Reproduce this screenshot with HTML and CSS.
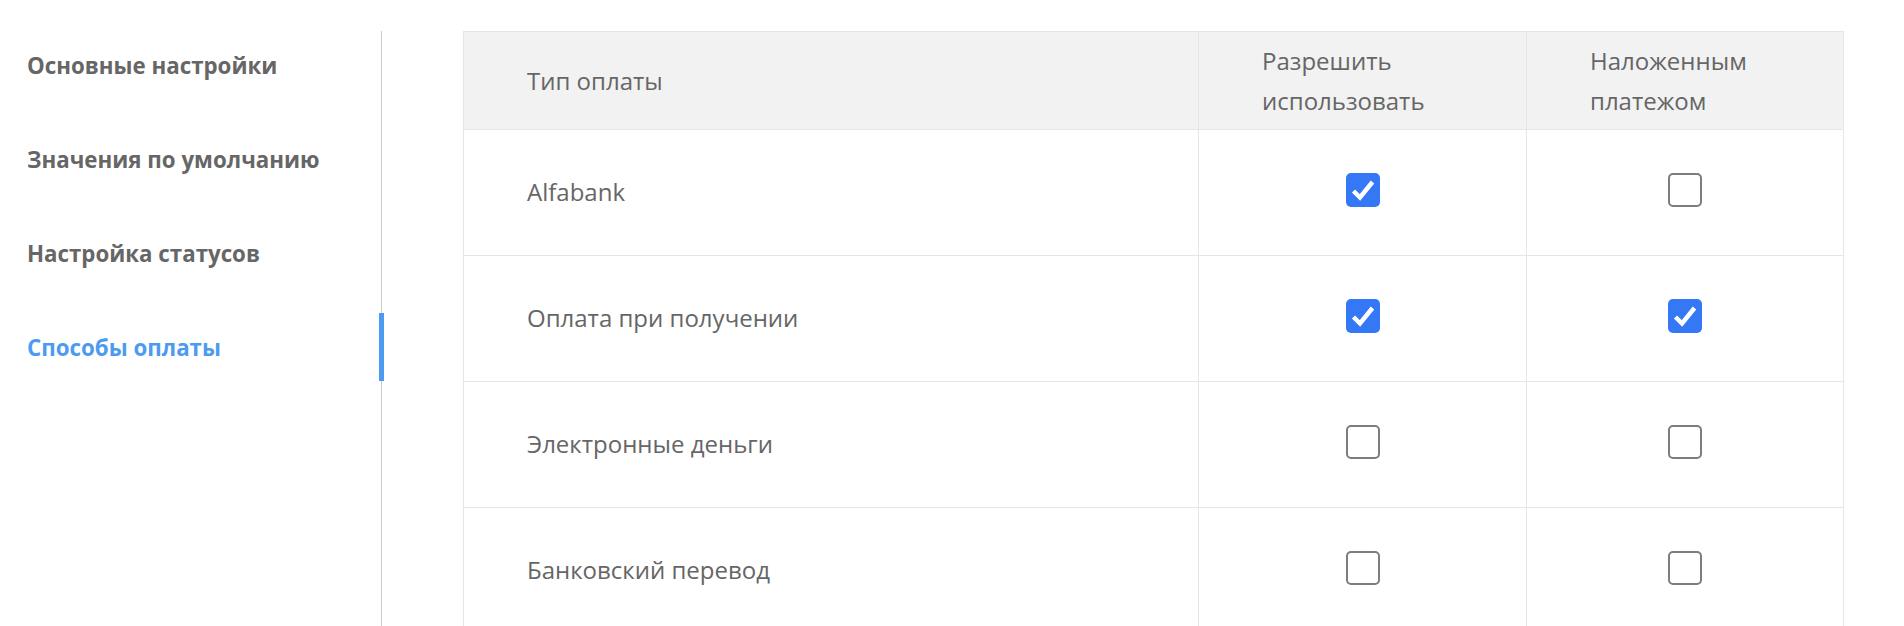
FILE: index.html
```html
<!DOCTYPE html>
<html>

<head>
    <meta charset="UTF-8">
    <title>Способы оплаты</title>
    <link rel="stylesheet" href="styles.css">
</head>

<body>
    <div class="page">
        <nav class="sideMenu">
            <a class="menuItem" href="#">Основные настройки</a>
            <a class="menuItem" href="#">Значения по умолчанию</a>
            <a class="menuItem" href="#">Настройка статусов</a>
            <a class="menuItem active" href="#">Способы оплаты</a>
        </nav>
        <main class="content">
            <table class="payTable">
                <colgroup>
                    <col class="colName">
                    <col class="colAllow">
                    <col class="colCod">
                </colgroup>
                <thead>
                    <tr>
                        <th>Тип оплаты</th>
                        <th>Разрешить<br>использовать</th>
                        <th>Наложенным<br>платежом</th>
                    </tr>
                </thead>
                <tbody>
                    <tr>
                        <td>Alfabank</td>
                        <td class="checkCell"><span class="checkBox checked"><svg viewBox="0 0 34 34"><path d="M7.5 18 L14 24.5 L26.5 9"/></svg></span></td>
                        <td class="checkCell"><span class="checkBox"></span></td>
                    </tr>
                    <tr>
                        <td>Оплата при получении</td>
                        <td class="checkCell"><span class="checkBox checked"><svg viewBox="0 0 34 34"><path d="M7.5 18 L14 24.5 L26.5 9"/></svg></span></td>
                        <td class="checkCell"><span class="checkBox checked"><svg viewBox="0 0 34 34"><path d="M7.5 18 L14 24.5 L26.5 9"/></svg></span></td>
                    </tr>
                    <tr>
                        <td>Электронные деньги</td>
                        <td class="checkCell"><span class="checkBox"></span></td>
                        <td class="checkCell"><span class="checkBox"></span></td>
                    </tr>
                    <tr>
                        <td>Банковский перевод</td>
                        <td class="checkCell"><span class="checkBox"></span></td>
                        <td class="checkCell"><span class="checkBox"></span></td>
                    </tr>
                </tbody>
            </table>
        </main>
    </div>
</body>

</html>
```

FILE: styles.css
```css
html {
    background: #ffffff;
    color: #666666;
    font-family: "Open Sans", "Noto Sans", sans-serif;
    font-size: 24px;
}
body {
    margin: 0;
    height: 626px;
    overflow: hidden;
}
.page {
    display: flex;
    align-items: stretch;
    padding-top: 31px;
    height: 100%;
    box-sizing: border-box;
}
.sideMenu {
    display: flex;
    flex-direction: column;
    gap: 26px;
    width: 381px;
    flex-shrink: 0;
    border-right: 1px solid #cccccc;
}
.menuItem {
    position: relative;
    display: flex;
    align-items: center;
    height: 68px;
    padding-left: 27px;
    font-weight: 700;
    font-size: 22.3px;
    color: #666666;
    text-decoration: none;
}
.menuItem.active {
    color: #4d9bf0;
}
.menuItem.active:after {
    content: "";
    position: absolute;
    top: 0;
    right: -3px;
    width: 5px;
    height: 100%;
    background: #4d9bf0;
}
.content {
    flex: 1;
    padding: 0 60px 0 81px;
}
.payTable {
    width: 100%;
    border-collapse: collapse;
    table-layout: fixed;
}
.colName {
    width: 735px;
}
.colAllow {
    width: 328px;
}
.payTable th,
.payTable td {
    border: 1px solid #e6e6e6;
    text-align: left;
    vertical-align: middle;
    padding: 0 0 0 63px;
}
.payTable th {
    background: #f2f2f2;
    font-weight: 400;
    line-height: 40px;
    height: 98px;
    box-sizing: border-box;
}
.payTable td {
    height: 122px;
    padding-bottom: 3px;
}
.payTable td.checkCell {
    text-align: center;
    padding: 0;
}
.checkBox {
    display: inline-block;
    vertical-align: middle;
    width: 34px;
    height: 34px;
    margin-bottom: 6px;
    box-sizing: border-box;
    border: 2px solid #7d7d7d;
    border-radius: 5px;
    background: #ffffff;
}
.checkBox.checked {
    border: none;
    background: #3478f6;
}
.checkBox svg {
    display: block;
    width: 100%;
    height: 100%;
}
.checkBox path {
    fill: none;
    stroke: #ffffff;
    stroke-width: 4.5;
}
```
